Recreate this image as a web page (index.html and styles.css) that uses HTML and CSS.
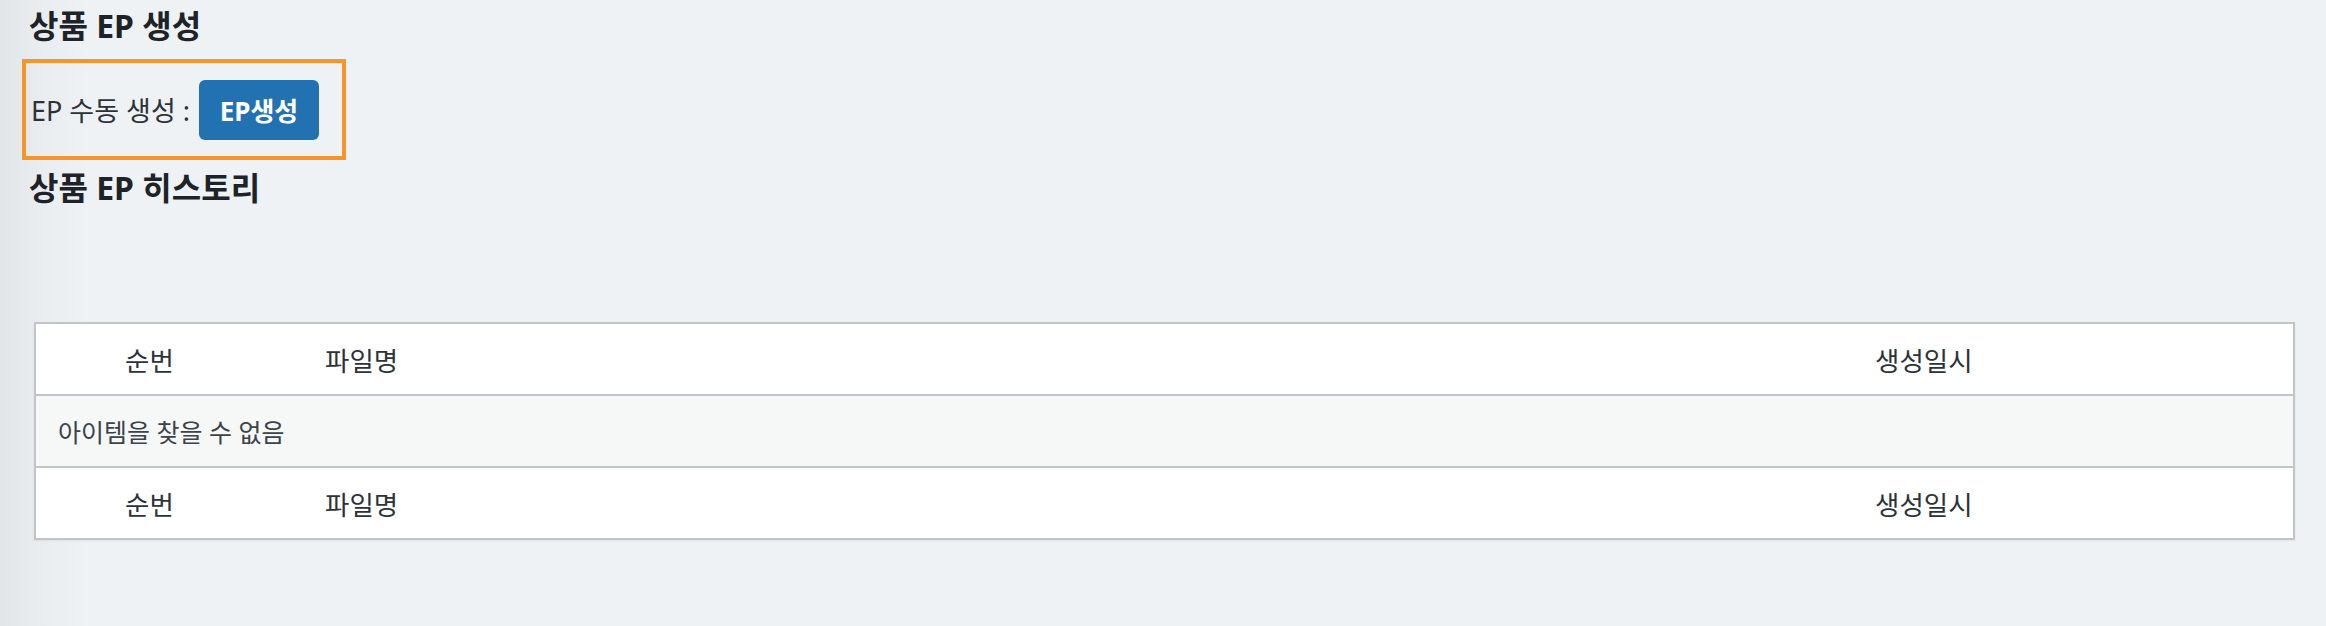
FILE: index.html
```html
<!DOCTYPE html>
<html lang="ko">
<head>
<meta charset="utf-8">
<title>상품 EP</title>
<link rel="stylesheet" href="styles.css">
</head>
<body>
<div class="page">
  <h2 class="title">상품 EP 생성</h2>
  <div class="manual-box">
    <span class="manual-label">EP 수동 생성 :</span>
    <button class="btn-primary" type="button">EP생성</button>
  </div>
  <h2 class="title title-history">상품 EP 히스토리</h2>
  <table class="history-table">
    <colgroup>
      <col class="col-no">
      <col class="col-file">
      <col class="col-date">
    </colgroup>
    <thead>
      <tr><th class="cell-no">순번</th><th>파일명</th><th>생성일시</th></tr>
    </thead>
    <tbody>
      <tr class="row-empty"><td colspan="3">아이템을 찾을 수 없음</td></tr>
    </tbody>
    <tfoot>
      <tr><th class="cell-no">순번</th><th>파일명</th><th>생성일시</th></tr>
    </tfoot>
  </table>
</div>
</body>
</html>
```

FILE: styles.css
```css
html, body {
  margin: 0;
  padding: 0;
}

body {
  min-height: 626px;
  background: linear-gradient(to right, #e2e5e8 0px, #eaedf0 40px, #eef2f5 90px, #eef2f5 100%);
  font-family: "Noto Sans", "Noto Sans CJK KR", sans-serif;
  color: #2c3338;
}

.page {
  padding: 6px 0 0 22px;
}

.title {
  margin: 0 0 0 7px;
  font-family: "Noto Sans", "Noto Sans CJK KR", sans-serif;
  font-size: 32px;
  line-height: 40px;
  font-weight: 700;
  color: #1d2327;
}

.manual-box {
  margin-top: 13px;
  width: 311px;
  height: 93px;
  border: 4px solid #f7952c;
  display: flex;
  align-items: center;
  padding-left: 5px;
  box-sizing: content-box;
}

.manual-label {
  font-size: 27px;
  color: #2c3338;
  margin-right: 9px;
}

.btn-primary {
  width: 120px;
  height: 60px;
  border: 0;
  border-radius: 6px;
  background: #2271b1;
  color: #ffffff;
  font-family: "Noto Sans", "Noto Sans CJK KR", sans-serif;
  font-size: 26px;
  font-weight: 700;
  padding: 0;
  margin-top: 1px;
}

.title-history {
  margin-top: 8px;
}

.history-table {
  margin: 114px 0 0 12px;
  width: 2261px;
  border-collapse: collapse;
  table-layout: fixed;
  background: #ffffff;
  border: 2px solid #c3c4c7;
  box-shadow: 0 1px 2px rgba(0, 0, 0, 0.06);
}

.col-no { width: 266px; }
.col-date { width: 443px; }

.history-table th,
.history-table td {
  height: 70px;
  padding: 0 0 0 24px;
  text-align: left;
  font-weight: 400;
  font-size: 26.5px;
  color: #2c3338;
  vertical-align: middle;
}

.history-table th.cell-no {
  padding-left: 89px;
}

.history-table thead tr,
.history-table tfoot tr {
  border: 2px solid #c3c4c7;
}

.row-empty td {
  background: #f6f7f7;
  font-size: 25px;
  padding-left: 22px;
  color: #3c434a;
}
```
